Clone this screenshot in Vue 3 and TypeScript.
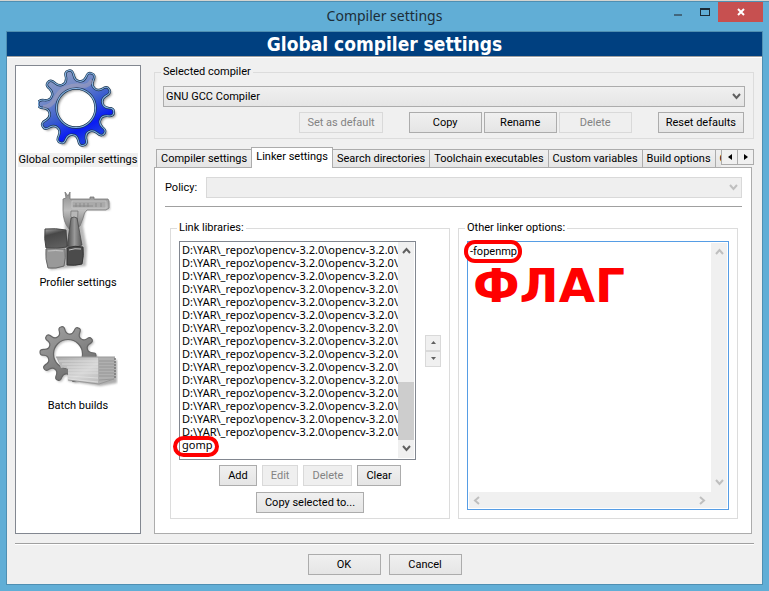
<script setup lang="ts">
import { ref } from 'vue'

function gearPath(cx: number, cy: number, outer: number, inner: number, hole: number, start: number): string {
  const teeth = 10
  const at = (r: number, deg: number): string => {
    const a = (deg * Math.PI) / 180
    return `${(cx + r * Math.cos(a)).toFixed(2)} ${(cy + r * Math.sin(a)).toFixed(2)}`
  }
  const step = 360 / teeth
  let d = `M${at(inner, start - step / 2)}`
  for (let i = 0; i < teeth; i++) {
    const c = start + i * step
    d += `Q${at(inner, c - 9)} ${at((inner + outer) / 2, c - 7)}`
    d += `Q${at(outer, c - 7)} ${at(outer, c - 1)}`
    d += `Q${at(outer + 1, c + 6)} ${at((inner + outer) / 2, c + 7)}`
    d += `Q${at(inner, c + 9)} ${at(inner, c + step / 2)}`
  }
  d += `ZM${cx - hole} ${cy}a${hole} ${hole} 0 1 0 ${hole * 2} 0a${hole} ${hole} 0 1 0 ${-hole * 2} 0Z`
  return d
}

const bigGear = gearPath(38, 39, 38, 27, 19.5, -101)
const smallGear = gearPath(30, 39, 28, 20, 14.5, -104)

const sections = ['Global compiler settings', 'Profiler settings', 'Batch builds']
const section = ref(0)

const tabs = [
  'Compiler settings',
  'Linker settings',
  'Search directories',
  'Toolchain executables',
  'Custom variables',
  'Build options',
  'Other settings',
]
const tab = ref(1)

const repo = 'D:\\YAR\\_repoz\\opencv-3.2.0\\opencv-3.2.0\\'
const libraries = [...Array.from({ length: 15 }, () => repo), 'gomp']
const linkerOptions = ref('-fopenmp')
</script>

<template>
  <div class="window">
    <header class="titlebar">
      <h1 class="title">Compiler settings</h1>
      <div class="controls">
        <button class="control" type="button" aria-label="Minimize">
          <svg width="8" height="12"><path d="M0 8h8v2H0z" fill="#42677d" /></svg>
        </button>
        <button class="control" type="button" aria-label="Maximize">
          <svg width="10" height="12"><path d="M0 2h10v8H0zM1 4v5h8V4z" fill="#1b2b36" fill-rule="evenodd" /></svg>
        </button>
        <button class="control close" type="button" aria-label="Close">
          <svg width="8" height="8"><path d="M1 1l6 6M7 1l-6 6" stroke="#fff" stroke-width="2" /></svg>
        </button>
      </div>
    </header>

    <div class="client">
      <h2 class="banner">Global compiler settings</h2>
      <main class="main">
        <nav class="sidebar">
          <button
            v-for="(name, i) in sections"
            :key="name"
            type="button"
            class="section"
            :class="{ current: section === i }"
            @click="section = i"
          >
            <svg v-if="i === 0" class="icon" viewBox="0 0 80 80">
              <defs>
                <linearGradient id="blue" x1="0.2" y1="0.05" x2="0.65" y2="0.9">
                  <stop offset="0" stop-color="#8e9cc4" />
                  <stop offset="0.3" stop-color="#7088c8" />
                  <stop offset="0.6" stop-color="#3558d0" />
                  <stop offset="0.85" stop-color="#0a1cf4" />
                  <stop offset="1" stop-color="#1c3ce0" />
                </linearGradient>
                <filter id="soft"><feGaussianBlur stdDeviation="1.1" /></filter>
              </defs>
              <path :d="bigGear" transform="translate(2 2)" fill="#555" fill-rule="evenodd" opacity="0.6" filter="url(#soft)" />
              <path :d="bigGear" fill="url(#blue)" fill-rule="evenodd" stroke="#1b344e" stroke-width="2.4" />
              <path :d="bigGear" fill="none" stroke="#86b4e6" stroke-width="1.1" />
              <path d="M5 38q8 0 12-8t10-11q10-4 18-2 6 0 9-6" fill="none" stroke="#a9a3b8" stroke-width="4" opacity="0.5" />
            </svg>
            <svg v-else-if="i === 1" class="icon" viewBox="0 0 80 80">
              <defs>
                <linearGradient id="steel" x1="0" y1="0" x2="0" y2="1">
                  <stop offset="0" stop-color="#8d8d8d" />
                  <stop offset="0.5" stop-color="#bdbdbd" />
                  <stop offset="1" stop-color="#777" />
                </linearGradient>
                <linearGradient id="darkcube" x1="0" y1="0" x2="0.3" y2="1">
                  <stop offset="0" stop-color="#aaa" />
                  <stop offset="0.35" stop-color="#484848" />
                  <stop offset="1" stop-color="#5e5e5e" />
                </linearGradient>
                <linearGradient id="cone" x1="0" y1="0" x2="1" y2="0">
                  <stop offset="0" stop-color="#444" />
                  <stop offset="0.5" stop-color="#999" />
                  <stop offset="1" stop-color="#555" />
                </linearGradient>
                <filter id="shade"><feGaussianBlur stdDeviation="1.2" /></filter>
              </defs>
              <path d="M28 10h44v8H48l-3 16 4 22-1 18-36 4V58h14z" fill="#888" opacity="0.6" filter="url(#shade)" />
              <path d="M27 0l3 4 2-4v7h20V5h4v2h14l1 2v7l-3 2H49q-3 2-4 8l-3 8-3 2 1-17h-7q-1 5 1 9v8l-3 1q-6-7-6-19V7l3-1z" fill="url(#steel)" stroke="#777" stroke-width="0.8" />
              <path d="M34 9h34v7H34z" fill="#aaa" stroke="#ccc" stroke-width="0.7" />
              <path d="M35 14h20M38 11v4M42 11v4M46 11v4M50 11v4M58 11v4M63 11v4" stroke="#858585" stroke-width="0.8" />
              <path d="M33 26q3-2 6 0l5 27q-7 4-15 1z" fill="url(#cone)" stroke="#444" stroke-width="0.7" />
              <path d="M7 37q11-1 21 1l1 17q-10 2-21 1-2-9-1-19z" fill="url(#darkcube)" stroke="#444" />
              <path d="M29 56q8-3 16-1 1 9-1 17-7 2-15 1z" fill="#4b4b4b" stroke="#333" />
              <path d="M8 57q10-1 19 0 1 9-1 17-8 3-16 2-3-9-2-19z" fill="#999" stroke="#666" />
              <path d="M31 58q6-2 12-1M10 59q8-1 15 0" fill="none" stroke="#c4c4c4" />
            </svg>
            <svg v-else class="icon" viewBox="0 0 80 80">
              <defs>
                <linearGradient id="gray" x1="0" y1="0" x2="0.6" y2="1">
                  <stop offset="0" stop-color="#a4a4a4" />
                  <stop offset="0.5" stop-color="#8a8a8a" />
                  <stop offset="1" stop-color="#6c6c6c" />
                </linearGradient>
                <linearGradient id="sheets" x1="0" y1="0" x2="1" y2="1">
                  <stop offset="0" stop-color="#aaa" />
                  <stop offset="0.6" stop-color="#d5d5d5" />
                  <stop offset="1" stop-color="#bbb" />
                </linearGradient>
                <filter id="haze"><feGaussianBlur stdDeviation="1.1" /></filter>
              </defs>
              <path d="M32 45h47v23l-17 3-32-5z" fill="#777" opacity="0.6" filter="url(#haze)" />
              <path :d="smallGear" transform="translate(1.5 1.5)" fill="#777" fill-rule="evenodd" opacity="0.5" filter="url(#haze)" />
              <path :d="smallGear" fill="url(#gray)" fill-rule="evenodd" stroke="#666" stroke-width="1.2" />
              <path d="M18 42h43v27l-31-4V54q-4-2-7-1z" fill="url(#sheets)" />
              <path d="M60 42h17l-1 23-16 4z" fill="#b0b0b0" />
              <path d="M21 46h39M24 49h36M29 52h31M30 55h30M30 58h30M30 61l30 2M30 64l30 3" stroke="#e4e4e4" stroke-width="0.7" />
              <path d="M61 46h15M61 49h15M61 52h15M61 55h15M61 58h15M61 61h15M61 65l15-1" stroke="#8c8c8c" stroke-width="0.7" />
              <path d="M77 43v21" stroke="#777" stroke-width="1.5" stroke-dasharray="2 1" />
              <path d="M18 42h59M76 64l-15 5-31-4" fill="none" stroke="#999" />
            </svg>
            <span class="section-name">{{ name }}</span>
          </button>
        </nav>

        <div class="content">
          <fieldset class="group compiler">
            <legend>Selected compiler</legend>
            <div class="combo">
              <select aria-label="Selected compiler"><option>GNU GCC Compiler</option></select>
              <svg class="chevron" width="9" height="8"><path d="M1 1l3.5 4L8 1" /></svg>
            </div>
            <div class="actions">
              <button class="btn" type="button" disabled>Set as default</button>
              <div class="pack">
                <button class="btn wide" type="button">Copy</button>
                <button class="btn wide" type="button">Rename</button>
                <button class="btn wide" type="button" disabled>Delete</button>
              </div>
              <button class="btn" type="button">Reset defaults</button>
            </div>
          </fieldset>

          <div class="tabbar">
            <div class="tabs" role="tablist">
              <button
                v-for="(name, i) in tabs"
                :key="name"
                type="button"
                role="tab"
                class="tab"
                :class="{ active: tab === i }"
                :aria-selected="tab === i"
                @click="tab = i"
              >{{ name }}</button>
            </div>
            <div class="scrollers">
              <button type="button" aria-label="Previous tabs"><svg width="4" height="6"><path d="M4 0v6L0 3z" /></svg></button>
              <button type="button" aria-label="Next tabs"><svg width="4" height="6"><path d="M0 0v6l4-3z" /></svg></button>
            </div>
          </div>

          <section class="panel">
            <div class="policy">
              <label for="policy">Policy:</label>
              <div class="combo off">
                <select id="policy" disabled></select>
                <svg class="chevron" width="9" height="8"><path d="M1 1l3.5 4L8 1" /></svg>
              </div>
            </div>
            <hr class="rule" />
            <div class="columns">
              <fieldset class="group libs">
                <legend>Link libraries:</legend>
                <div class="list-row">
                  <div class="listbox">
                    <select multiple aria-label="Link libraries">
                      <option v-for="(lib, i) in libraries" :key="i">{{ lib }}</option>
                    </select>
                    <div class="vbar">
                      <svg class="chevron" width="9" height="8"><path d="M1 6l3.5-4L8 6" /></svg>
                      <span class="thumb"></span>
                      <svg class="chevron" width="9" height="8"><path d="M1 1l3.5 4L8 1" /></svg>
                    </div>
                    <span class="mark mark-lib"></span>
                  </div>
                  <div class="spin">
                    <button type="button" aria-label="Move up"><svg width="5" height="3"><path d="M0 3h5L2.5 0z" /></svg></button>
                    <button type="button" aria-label="Move down"><svg width="5" height="3"><path d="M0 0h5L2.5 3z" /></svg></button>
                  </div>
                </div>
                <div class="buttons">
                  <button class="btn" type="button">Add</button>
                  <button class="btn" type="button" disabled>Edit</button>
                  <button class="btn" type="button" disabled>Delete</button>
                  <button class="btn" type="button">Clear</button>
                </div>
                <div class="buttons">
                  <button class="btn" type="button">Copy selected to...</button>
                </div>
              </fieldset>

              <fieldset class="group options">
                <legend>Other linker options:</legend>
                <div class="editor">
                  <textarea v-model="linkerOptions" aria-label="Other linker options" spellcheck="false"></textarea>
                  <div class="vbar off">
                    <svg class="chevron" width="9" height="8"><path d="M1 6l3.5-4L8 6" /></svg>
                    <svg class="chevron" width="9" height="8"><path d="M1 1l3.5 4L8 1" /></svg>
                  </div>
                  <div class="hbar off">
                    <svg class="chevron" width="8" height="9"><path d="M6 1L2 4.5 6 8" /></svg>
                    <svg class="chevron" width="8" height="9"><path d="M2 1l4 3.5L2 8" /></svg>
                  </div>
                  <span class="mark mark-flag"></span>
                  <strong class="note">ФЛАГ</strong>
                </div>
              </fieldset>
            </div>
          </section>
        </div>
      </main>

      <footer class="footer">
        <button class="btn wide" type="button">OK</button>
        <button class="btn wide" type="button">Cancel</button>
      </footer>
    </div>
  </div>
</template>

<style>
body {
  margin: 0;
}
</style>

<style scoped>
.window,
.window * {
  box-sizing: border-box;
}
.window {
  display: flex;
  flex-direction: column;
  min-height: 100vh;
  padding: 0 6px 6px;
  border-top: 1px solid #d4d4d0;
  background: #61aed6;
  box-shadow: inset 0 1px #4f8fb2;
  font: 11px/14px Roboto, sans-serif;
  color: #000;
}
button,
select,
textarea {
  margin: 0;
  padding: 0;
  border-radius: 0;
  font: inherit;
  color: inherit;
}
svg {
  display: block;
  flex: none;
}

.titlebar {
  display: grid;
  grid-template-columns: 1fr auto;
  height: 30px;
}
.title {
  grid-area: 1 / 1 / 2 / 3;
  margin: 0;
  padding-top: 5px;
  font: 14px/20px "Noto Sans", sans-serif;
  text-align: center;
  color: #1c2d38;
}
.controls {
  grid-area: 1 / 2;
  display: flex;
  align-items: flex-start;
  padding-top: 1px;
}
.control {
  display: grid;
  place-items: center;
  width: 27px;
  height: 20px;
  border: 0;
  background: none;
}
.control.close {
  width: 45px;
  background: #c75050;
}

.client {
  flex: 1;
  display: flex;
  flex-direction: column;
  border: 1px solid #4f8fb2;
  background: #f0f0f0;
}
.banner {
  margin: 0;
  border-bottom: 1px solid #a0a0a0;
  box-shadow: 0 1px #fff;
  background: #004080;
  color: #fff;
  font: bold 19px/24px "DejaVu Sans Condensed", sans-serif;
  text-align: center;
}
.main {
  flex: 1;
  display: flex;
  gap: 13px;
  margin: 0 8px;
  padding: 8px 0 9px;
  border-bottom: 1px solid #a0a0a0;
  box-shadow: 0 1px #fff;
}
.sidebar {
  flex: none;
  width: 126px;
  border: 1px solid #828790;
  background: #fff;
}
.section {
  display: flex;
  flex-direction: column;
  align-items: center;
  gap: 4px;
  width: 100%;
  height: 123px;
  padding-top: 3px;
  border: 0;
  background: none;
}
.icon {
  width: 80px;
  height: 80px;
}
.section-name {
  padding: 0 1px;
  white-space: nowrap;
}
.current .section-name {
  background: #f0f0f0;
}

.content {
  flex: 1;
  min-width: 0;
  display: flex;
  flex-direction: column;
}
.group {
  min-width: 0;
  margin: 0;
  padding: 6px 8px 5px;
  border: 1px solid #dcdcdc;
}
.group legend {
  margin-left: -2px;
  padding: 0 2px;
}
.compiler {
  padding-top: 7px;
}
.combo {
  display: grid;
  align-items: center;
}
.combo select {
  grid-area: 1 / 1;
  width: 100%;
  height: 21px;
  padding: 0 2px;
  border: 1px solid #acacac;
  background: linear-gradient(#f0f0f0, #e5e5e5);
  appearance: none;
}
.combo .chevron {
  grid-area: 1 / 1;
  justify-self: end;
  margin-right: 4px;
  pointer-events: none;
}
.chevron {
  fill: none;
  stroke: #606060;
  stroke-width: 2;
}
.off .chevron {
  stroke: #bfbfbf;
}
.off select {
  border-color: #d9d9d9;
  background: #efefef;
  opacity: 1;
}
.actions {
  display: flex;
  justify-content: flex-end;
  gap: 26px;
  padding: 5px 1px 0 0;
}
.pack {
  display: flex;
  gap: 2px;
}
.btn {
  height: 21px;
  padding: 0 7px;
  border: 1px solid #acacac;
  background: linear-gradient(#f0f0f0, #e5e5e5);
  white-space: nowrap;
}
.btn:disabled {
  border-color: #d9d9d9;
  background: #efefef;
  color: #838383;
}
.btn.wide {
  min-width: 73px;
}
.buttons .btn {
  padding: 0 8px;
}

.tabbar {
  display: flex;
  align-items: flex-start;
  margin-top: 8px;
}
.tabs {
  flex: 1;
  min-width: 0;
  display: flex;
  align-items: flex-end;
  height: 21px;
  margin-bottom: -1px;
  padding-left: 2px;
  overflow: hidden;
  position: relative;
}
.tab {
  flex: none;
  height: 19px;
  padding: 0 4px;
  border: 1px solid #acacac;
  border-right-width: 0;
  background: linear-gradient(#f0f0f0, #e5e5e5);
  white-space: nowrap;
}
.tab.active {
  height: 21px;
  padding-bottom: 2px;
  border-right-width: 1px;
  border-bottom: 0;
  background: #fff;
}
.active + .tab {
  border-left-width: 0;
}
.scrollers {
  display: flex;
  padding-top: 2px;
}
.scrollers button {
  display: grid;
  place-items: center;
  width: 17px;
  height: 16px;
  border: 1px solid #acacac;
  background: #f0f0f0;
}
.scrollers button + button {
  width: 16px;
  border-left: 0;
}

.panel {
  flex: 1;
  display: flex;
  flex-direction: column;
  margin-right: 2px;
  padding: 9px 9px 14px 10px;
  border: 1px solid #acacac;
  background: #fff;
}
.policy {
  display: flex;
  align-items: center;
  gap: 9px;
}
.policy .combo {
  flex: 1;
}
.rule {
  width: 100%;
  height: 1px;
  margin: 8px 0 14px;
  border: 0;
  background: #a0a0a0;
}
.columns {
  flex: 1;
  display: grid;
  grid-template-columns: 1fr 1fr;
  gap: 8px;
  padding: 0 4px 0 5px;
}
.libs,
.options {
  display: flex;
  flex-direction: column;
}
.list-row {
  flex: 1;
  display: flex;
  align-items: center;
  gap: 9px;
}
.listbox {
  position: relative;
  align-self: stretch;
  flex: 1;
  min-width: 0;
  display: flex;
  padding: 0 1px 1px;
  border: 1px solid #828790;
  background: #fff;
}
.listbox select {
  flex: 1;
  min-width: 0;
  height: auto;
  padding: 0;
  border: 0;
  outline: 0;
  overflow: hidden;
  background: none;
  font-family: "Noto Sans", sans-serif;
  scrollbar-width: none;
}
.listbox option {
  min-height: 13px;
  height: 13px;
  padding: 0 0 0 1px;
  line-height: 13px;
}
.vbar {
  flex: none;
  display: flex;
  flex-direction: column;
  align-items: center;
  justify-content: space-between;
  width: 16px;
  padding: 5px 0;
  background: #f0f0f0;
}
.thumb {
  width: 16px;
  height: 58px;
  margin: auto 0 5px;
  background: #cdcdcd;
}
.spin {
  flex: none;
  display: flex;
  flex-direction: column;
}
.spin button {
  display: grid;
  place-items: center;
  width: 16px;
  height: 16px;
  border: 1px solid #d9d9d9;
  background: #f0f0f0;
}
.spin svg {
  fill: #606060;
}
.buttons {
  display: flex;
  justify-content: center;
  gap: 5px;
  padding-top: 5px;
}
.buttons + .buttons {
  padding-top: 6px;
}

.options {
  padding-bottom: 8px;
}
.editor {
  position: relative;
  flex: 1;
  display: grid;
  grid-template: 1fr 16px / 1fr 16px;
  padding: 1px;
  border: 1px solid #569de5;
}
.editor textarea {
  width: 100%;
  height: 100%;
  padding: 2px 1px;
  border: 0;
  outline: 0;
  overflow: hidden;
  resize: none;
  background: none;
}
.hbar {
  grid-column: 1 / 3;
  display: flex;
  align-items: center;
  justify-content: space-between;
  padding: 0 21px 0 4px;
  background: #f0f0f0;
}
.mark {
  position: absolute;
  border: 4px solid #f00;
  border-radius: 11px;
  pointer-events: none;
}
.mark-lib {
  left: -7px;
  bottom: 2px;
  width: 46px;
  height: 21px;
}
.mark-flag {
  left: -4px;
  top: -2px;
  width: 58px;
  height: 23px;
}
.note {
  position: absolute;
  left: 5px;
  top: 16px;
  color: #f00;
  font: bold 47px/56px "DejaVu Sans", sans-serif;
  pointer-events: none;
}

.footer {
  display: flex;
  justify-content: center;
  gap: 8px;
  padding: 10px 0 9px;
}
</style>
